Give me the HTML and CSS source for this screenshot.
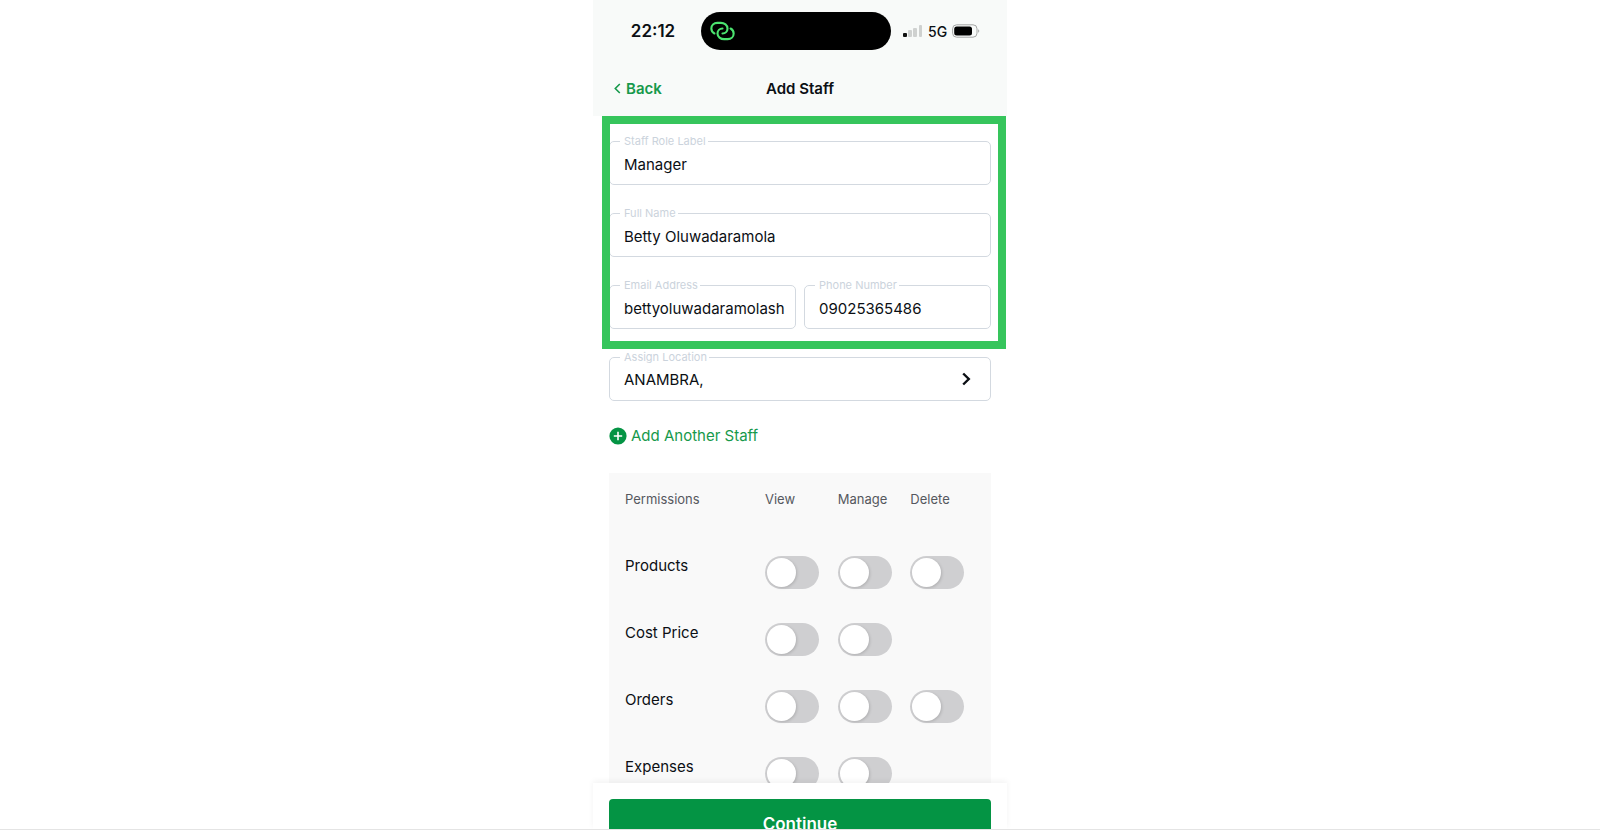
FILE: index.html
```html
<!DOCTYPE html>
<html lang="en">
<head>
<meta charset="utf-8">
<meta name="viewport" content="width=device-width, initial-scale=1">
<title>Add Staff</title>
<link rel="stylesheet" href="styles.css">
</head>
<body>
<div class="phone">
  <header class="top">
    <div class="status">
      <div class="clock">22:12</div>
      <div class="island">
        <svg class="link-icon" viewBox="0 0 26 20" fill="none" stroke="#4be36f" stroke-width="2.200" stroke-linecap="round">
          <path d="M4.600 12.600C2.400 11.400 1.400 9.500 1.400 7.400C1.400 4 4 1.500 7.600 1.500H11.200C15 1.500 18.200 4 18.200 7.400C18.200 10.400 16 12.600 13 12.600"/>
          <path d="M21.400 7.400C23.600 8.600 24.600 10.500 24.600 12.600C24.600 16 22 18.500 18.400 18.500H14.800C11 18.500 7.800 16 7.800 12.600C7.800 9.600 10 7.400 13 7.400"/>
        </svg>
      </div>
      <div class="signals">
        <svg class="bars" viewBox="0 0 20 14">
          <rect x="0" y="9" width="4" height="4" rx="1" fill="#111"/>
          <rect x="5" y="6" width="4" height="7" rx="1" fill="#cfd1d0"/>
          <rect x="10" y="4" width="4" height="9" rx="1" fill="#cfd1d0"/>
          <rect x="16" y="1" width="3" height="12" rx="1" fill="#cfd1d0"/>
        </svg>
        <span class="network">5G</span>
        <svg class="battery" viewBox="0 0 28 14">
          <rect x="0.600" y="0.800" width="24.400" height="12.400" rx="4" fill="none" stroke="#a4a6a5"/>
          <rect x="2.200" y="2.400" width="17.800" height="9.200" rx="2.500" fill="#000"/>
          <path d="M26.200 5.200V8.800C27.600 8.200 27.600 5.800 26.200 5.200Z" fill="#a4a6a5"/>
        </svg>
      </div>
    </div>
    <nav class="nav">
      <a class="back" href="#">
        <svg class="back-icon" viewBox="0 0 7 11" fill="none" stroke="currentColor" stroke-width="1.600"><path d="M5.800 1L1.300 5.500L5.800 10"/></svg>
        Back
      </a>
      <h1 class="title">Add Staff</h1>
    </nav>
  </header>

  <main class="content">
    <form class="form">
      <fieldset class="field">
        <legend><label for="role">Staff Role Label</label></legend>
        <input id="role" type="text" value="Manager">
      </fieldset>
      <fieldset class="field">
        <legend><label for="name">Full Name</label></legend>
        <input id="name" type="text" value="Betty Oluwadaramola">
      </fieldset>
      <div class="pair">
        <fieldset class="field">
          <legend><label for="email">Email Address</label></legend>
          <input id="email" type="text" value="bettyoluwadaramolash">
        </fieldset>
        <fieldset class="field">
          <legend><label for="phone">Phone Number</label></legend>
          <input id="phone" type="tel" value="09025365486">
        </fieldset>
      </div>
      <fieldset class="field">
        <legend><label for="location">Assign Location</label></legend>
        <button class="picker" id="location" type="button">
          ANAMBRA,
          <svg class="chevron" viewBox="0 0 9 14" fill="none" stroke="currentColor" stroke-width="2.400"><path d="M1.200 1.500L6.800 7L1.200 12.500"/></svg>
        </button>
      </fieldset>
    </form>
    <div class="highlight"></div>

    <button class="add" type="button">
      <svg class="plus" viewBox="0 0 18 18"><circle cx="9" cy="9" r="8.600" fill="#049444"/><path d="M9 4.800V13.200M4.800 9H13.200" stroke="#fff" stroke-width="1.600"/></svg>
      Add Another Staff
    </button>

    <div class="panel">
      <table class="permissions">
        <thead>
          <tr><th class="name-col" scope="col">Permissions</th><th scope="col">View</th><th scope="col">Manage</th><th scope="col">Delete</th></tr>
        </thead>
        <tbody>
          <tr><th scope="row">Products</th>
            <td><input class="toggle" type="checkbox" aria-label="View products"></td>
            <td><input class="toggle" type="checkbox" aria-label="Manage products"></td>
            <td><input class="toggle" type="checkbox" aria-label="Delete products"></td></tr>
          <tr><th scope="row">Cost Price</th>
            <td><input class="toggle" type="checkbox" aria-label="View cost price"></td>
            <td><input class="toggle" type="checkbox" aria-label="Manage cost price"></td>
            <td></td></tr>
          <tr><th scope="row">Orders</th>
            <td><input class="toggle" type="checkbox" aria-label="View orders"></td>
            <td><input class="toggle" type="checkbox" aria-label="Manage orders"></td>
            <td><input class="toggle" type="checkbox" aria-label="Delete orders"></td></tr>
          <tr><th scope="row">Expenses</th>
            <td><input class="toggle" type="checkbox" aria-label="View expenses"></td>
            <td><input class="toggle" type="checkbox" aria-label="Manage expenses"></td>
            <td></td></tr>
        </tbody>
      </table>
    </div>
  </main>

  <footer class="bottom">
    <button class="continue" type="submit">Continue</button>
  </footer>
</div>
</body>
</html>
```
FILE: styles.css
```css
* { box-sizing: border-box; }

body {
  margin: 0;
  height: 100vh;
  overflow: hidden;
  background: #fff;
  border-bottom: 1px solid #e4e4e4;
  color: #0b0f14;
  font-family: Inter, "Liberation Sans", sans-serif;
  font-size: 15px;
}

button, input { font: inherit; color: inherit; }

.phone {
  display: flex;
  flex-direction: column;
  max-width: 414px;
  height: 100%;
  margin: 0 auto;
}

.top { flex: none; background: #f8faf9; }

.status {
  display: grid;
  grid-template-columns: 1fr 190px 1fr;
  align-items: center;
  padding: 12px 8px 0 0;
}

.clock {
  padding-left: 12px;
  text-align: center;
  font-size: 17px;
  font-weight: 600;
}

.island {
  display: flex;
  align-items: center;
  height: 38px;
  padding-left: 9px;
  border-radius: 19px;
  background: #000;
}

.link-icon { width: 25px; height: 20px; }

.signals {
  display: flex;
  align-items: center;
  gap: 5px;
  padding-left: 12px;
}

.bars { flex: none; width: 20px; height: 14px; }
.network { font-size: 14px; font-weight: 500; }
.battery { flex: none; width: 28px; height: 14px; }

.nav {
  display: grid;
  grid-template-columns: 1fr auto 1fr;
  align-items: center;
  height: 66px;
  padding: 10px 21px 0;
}

.back {
  display: flex;
  align-items: center;
  gap: 5px;
  color: #16994b;
  font-weight: 600;
  text-decoration: none;
}

.back-icon { width: 7px; height: 11px; }
.title { margin: 0; font-size: 15px; font-weight: 600; }

.content {
  position: relative;
  flex: 1;
  min-height: 0;
  overflow: hidden;
  padding: 19px 16px 0;
}

.form { display: flex; flex-direction: column; gap: 22px; }
.pair { display: grid; grid-template-columns: 1fr 1fr; gap: 8px; }

.field {
  min-width: 0;
  height: 50px;
  margin: 0;
  padding: 0 10px;
  border: 1px solid #d3d9e0;
  border-radius: 5px;
}

.field legend {
  height: 12px;
  padding: 0 2px 0 4px;
  color: #cbd3dc;
  font-size: 11px;
  line-height: 12px;
}

.field input, .picker {
  display: block;
  width: 100%;
  height: 34px;
  padding: 0 0 0 4px;
  border: 0;
  background: none;
  outline: 0;
}

.picker {
  display: flex;
  align-items: center;
  justify-content: space-between;
  height: 32px;
  padding-right: 9px;
  text-align: left;
}

.chevron { width: 9px; height: 14px; }

/* Callout frame around the personal details */
.highlight {
  position: absolute;
  top: 0;
  right: 1px;
  left: 9px;
  height: 233px;
  border: 8px solid #36c55c;
  pointer-events: none;
}

.add {
  display: flex;
  align-items: center;
  gap: 4px;
  margin-top: 25px;
  padding: 0;
  border: 0;
  background: none;
  color: #16994b;
  line-height: 20px;
}

.plus { width: 18px; height: 18px; }

.panel {
  margin-top: 27px;
  padding: 0 8px 0 16px;
  background: #f9f9f9;
}

.permissions {
  width: 100%;
  table-layout: fixed;
  border-collapse: collapse;
}

.permissions th, .permissions td {
  padding: 0;
  text-align: left;
  vertical-align: top;
  font-weight: 400;
}

.name-col { width: 140px; }

.permissions thead th {
  height: 83px;
  padding-top: 16px;
  color: #55585e;
  font-size: 13px;
  line-height: 20px;
}

.permissions tbody tr { height: 67px; }
.permissions tbody th { line-height: 20px; }

.toggle {
  display: block;
  appearance: none;
  width: 54px;
  height: 33px;
  margin: 0;
  border-radius: 17px;
  background: #cfcfd1;
}

.toggle::before {
  content: "";
  display: block;
  width: 29px;
  height: 29px;
  margin: 2px;
  border-radius: 50%;
  background: #fff;
  box-shadow: 1px 1px 3px rgba(0, 0, 0, 0.15);
}

.toggle:checked { background: #049444; }
.toggle:checked::before { margin-left: 23px; }

.bottom {
  position: relative;
  flex: none;
  height: 46px;
  padding: 16px 16px 0;
  background: #fff;
  box-shadow: 0 -2px 6px rgba(0, 0, 0, 0.05);
}

.continue {
  width: 100%;
  height: 50px;
  border: 0;
  border-radius: 4px;
  background: #049444;
  color: #fff;
  font-size: 17px;
  font-weight: 600;
}
```
